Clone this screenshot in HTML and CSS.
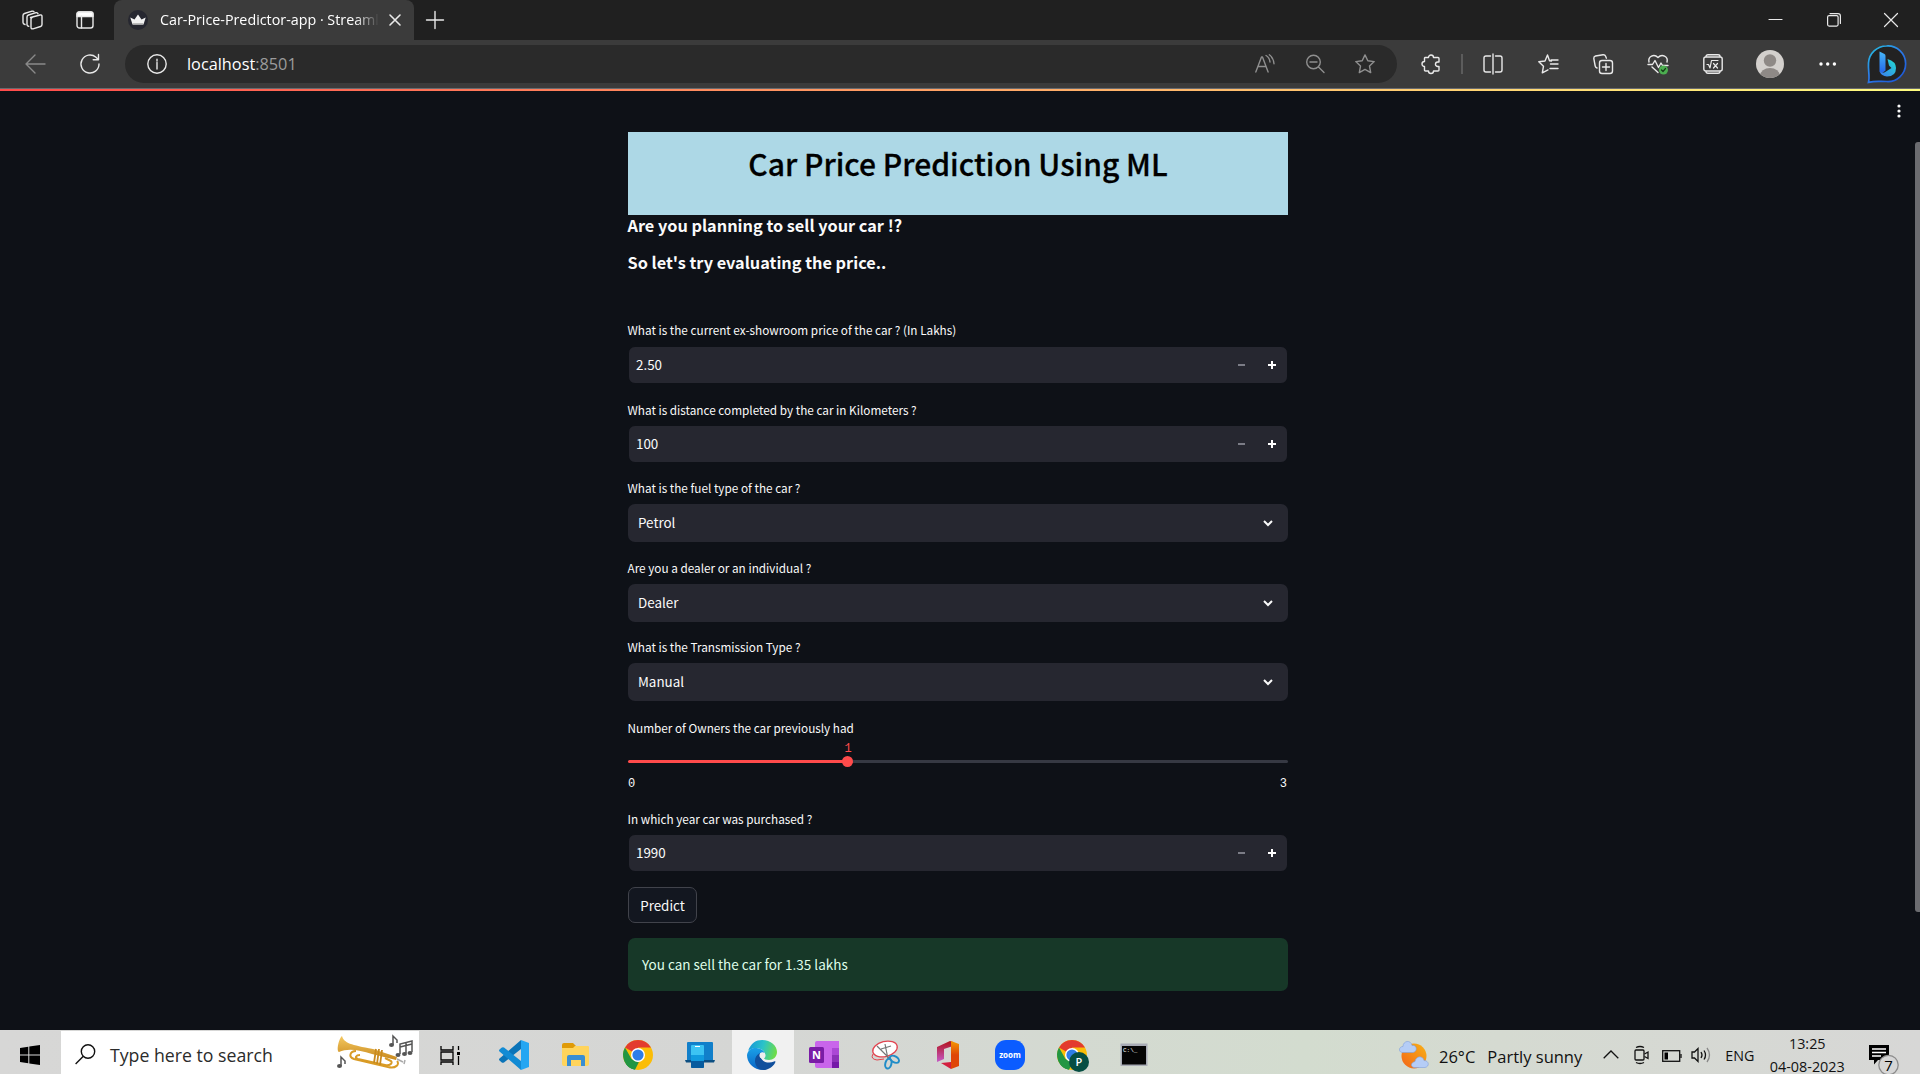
FILE: index.html
```html
<!DOCTYPE html>
<html lang="en">
<head>
<meta charset="utf-8">
<title>Car-Price-Predictor-app · Streamlit</title>
<link rel="stylesheet" href="styles.css">
</head>
<body>
<header class="tabbar">
  <svg class="ico workspaces" viewBox="0 0 22 20"><path d="M8.500 7.500 18 5q2-.5 2 1.500v8q0 1.500-1.500 2l-7.500 2.300q-2 .5-2-1.500V9q0-1.300 1.500-1.700" /><path d="M6.800 16.300 6 16q-1-.5-1-1.500V7q0-1.500 1.500-2l7.500-2.300q1.600-.4 2 1"/><path d="M3 14.500q-2-.5-2-2V5.500q0-1.500 1.500-2L10 1.200q1.500-.4 2 .6"/></svg>
  <svg class="ico tabact" viewBox="0 0 18 18"><rect x="1" y="1" width="16" height="16" rx="2.500"/><path d="M1 3q0-2 2-2h12q2 0 2 2v2.500H1z" fill="#fff"/><path d="M5.500 5v12"/></svg>
  <div class="tab">
    <svg class="favicon" viewBox="0 0 20 20"><circle cx="10" cy="10" r="10" fill="#262730"/><path d="M2.300 7.500 6.500 9.500 10 4.500l3.500 5 4.200-2-2.200 7H4.500z" fill="#f2f2f2"/><path d="m4.500 13 11 0-.4 1.500H4.900z" fill="#bbb"/></svg>
    <span class="tab-title">Car-Price-Predictor-app · Streaml</span>
    <svg class="ico close" viewBox="0 0 12 12"><path d="m1 1 10 10M11 1 1 11"/></svg>
  </div>
  <svg class="ico plus" viewBox="0 0 18 18"><path d="M9 .5v17M.5 9h17"/></svg>
  <div class="winctl">
    <svg class="ico" viewBox="0 0 14 14"><path d="M0 6.500h13" stroke-width="1.200"/></svg>
    <svg class="ico" viewBox="0 0 14 14"><rect x=".6" y="2.600" width="10.500" height="10.500" rx="1.500" stroke-width="1.200"/><path d="M3 .6h8q2.400 0 2.400 2.400v7.500" stroke-width="1.200"/></svg>
    <svg class="ico" viewBox="0 0 14 14"><path d="m.5.5 13 13m0-13-13 13" stroke-width="1.200"/></svg>
  </div>
</header>
<nav class="toolbar">
  <svg class="ico back" viewBox="0 0 20 20"><path d="M10 1 1 10l9 9M1 10h19"/></svg>
  <svg class="ico reload" viewBox="0 0 20 20"><path d="M19 10a9 9 0 1 1-3-6.700L18.500 5.700M18.500.5v5.300h-5.300"/></svg>
  <div class="address">
    <svg class="ico info" viewBox="0 0 20 20"><circle cx="10" cy="10" r="9.200"/><path d="M10 8.500V15M10 5.200V7"/></svg>
    <span class="url">localhost<span class="port">:8501</span></span>
    <svg class="ico" viewBox="0 0 20 20"><path d="M.8 18 6.500 3h1l5.600 15M3 12.500h8M11 1.500q3.500 2 4 6.500M14.300.8q4.200 3 4.700 9"/></svg>
    <svg class="ico" viewBox="0 0 20 20"><circle cx="8.500" cy="8" r="6.800"/><path d="m13.500 13 5.500 5.500M5 8h7"/></svg>
    <svg class="ico" viewBox="0 0 20 20"><path d="m10 .9 2.800 5.900 6.400.8-4.700 4.500 1.200 6.500L10 15.400l-5.700 3.200 1.200-6.500L.8 7.600l6.400-.8z"/></svg>
  </div>
  <svg class="ico puzzle" viewBox="0 0 20 20"><path d="M4 3.500h3.500a2.500 2.500 0 1 1 5 0H17q1 0 1 1V8h-1.300a2.200 2.200 0 0 0 0 4.500H18V16q0 1-1 1h-4.500a2.500 2.500 0 1 1-5 0H4.500q-1 0-1-1v-3.500a2.500 2.500 0 1 1 0-5v-3q0-1 .5-1z"/></svg>
  <span class="sep"></span>
  <div class="tools">
    <svg class="ico" viewBox="0 0 20 20"><path d="M10 0v20M7.500 2H3Q1 2 1 4v12q0 2 2 2h4.500M12.500 2H17q2 0 2 2v12q0 2-2 2h-4.500"/></svg>
    <svg class="ico" viewBox="0 0 20 20"><path d="M13.500 7 11.500 6.800 9.500 1 7 7 .8 7.700l4.700 4.500-1.200 6.700 5.700-3M12.500 10H20M13 6h7M12 14.500h8"/></svg>
    <svg class="ico" viewBox="0 0 20 20"><path d="M4 14q-1.500-.5-1.800-2L.8 4.500Q.6 2.500 2.500 2L10 .8q2-.2 2.600 1.400l.8 2"/><rect x="6.500" y="6.500" width="13" height="13" rx="2.500"/><path d="M13 9.500v7M9.500 13h7"/></svg>
    <svg class="ico" viewBox="0 0 20 20"><path d="M1 8C-.3 2.500 6-.5 10 3.500 14-.5 20.500 2.500 19 8M0 10.500h4.500L7 6.500l3.500 7L13 9l1.500 2.500H20M4 13l6 5.500"/><circle cx="15.500" cy="16" r="4.500" class="green"/><path d="m13.500 16 1.500 1.500 2.500-3" class="tick"/></svg>
    <svg class="ico" viewBox="0 0 20 20"><rect x=".8" y="3" width="18.400" height="14" rx="2"/><path d="M3 2.500Q3 .8 5 .8h10q2 0 2 1.700M3 17.500q0 1.700 2 1.700h10q2 0 2-1.700"/><path d="M4 10.500h1.500l1.500 3.500L8.500 6.500H15M10.500 9.500l4 4.500m0-4.500-4 4.500" stroke-width="1.200"/></svg>
  </div>
  <svg class="avatar" viewBox="0 0 28 28"><clipPath id="av"><circle cx="14" cy="14" r="14"/></clipPath><g clip-path="url(#av)"><rect width="28" height="28" fill="#d3d0cd"/><circle cx="14" cy="10.500" r="6.200" fill="#8e8986"/><ellipse cx="14" cy="26" rx="10" ry="8" fill="#8e8986"/></g></svg>
  <svg class="dots" viewBox="0 0 18 4"><circle cx="2" cy="2" r="1.700"/><circle cx="8.700" cy="2" r="1.700"/><circle cx="15.400" cy="2" r="1.700"/></svg>
  <svg class="bing" viewBox="0 0 38 38"><defs><linearGradient id="bg1" x1="0" y1="0" x2=".8" y2="1"><stop offset="0" stop-color="#25c5e0"/><stop offset=".5" stop-color="#2c7be8"/><stop offset="1" stop-color="#1c57d6"/></linearGradient><linearGradient id="bg2" x1="0" y1="0" x2="0" y2="1"><stop offset="0" stop-color="#46b8f8"/><stop offset="1" stop-color="#2362e8"/></linearGradient><linearGradient id="bg3" x1="1" y1="0" x2="0" y2="1"><stop offset="0" stop-color="#20e0d0"/><stop offset="1" stop-color="#3c78f0"/></linearGradient></defs><path d="M19.500 1a17.800 17.800 0 1 1 0 35.500c-7 0-11-.8-18 .8C3 31 1 26 1.500 18A18 18 0 0 1 19.500 1z" fill="#222" stroke="url(#bg1)" stroke-width="1.700"/><path d="m12.500 6.500 5 2.500q1 .5 1 2v14.500l-3.800 3-2.200-2z" fill="url(#bg2)"/><path d="M20.500 14q8.500 2.500 8.500 9 0 8.500-9 8.500-5.500-.5-7.500-5 3 2.500 6.500 0l5.500-3.500-2.500-2.500z" fill="url(#bg3)"/></svg>
</nav>
<div class="decoration"></div>
<main class="page">
  <svg class="kebab" viewBox="0 0 4 14"><circle cx="2" cy="2" r="1.600"/><circle cx="2" cy="7" r="1.600"/><circle cx="2" cy="12" r="1.600"/></svg>
  <div class="scroll"></div>
  <section class="column">
    <div class="banner"><h1>Car Price Prediction Using ML</h1></div>
    <h4 class="q1">Are you planning to sell your car !?</h4>
    <h4 class="q2">So let's try evaluating the price..</h4>
    <div class="fields">
      <div class="field"><label>What is the current ex-showroom price of the car ? (In Lakhs)</label><div class="number"><span>2.50</span><i class="minus"></i><i class="add"></i></div></div>
      <div class="field distance"><label>What is distance completed by the car in Kilometers ?</label><div class="number"><span>100</span><i class="minus"></i><i class="add"></i></div></div>
      <div class="field"><label>What is the fuel type of the car ?</label><div class="select"><span>Petrol</span><svg class="chev" viewBox="0 0 10 7"><path d="m1 1 4 4 4-4"/></svg></div></div>
      <div class="field seller"><label>Are you a dealer or an individual ?</label><div class="select"><span>Dealer</span><svg class="chev" viewBox="0 0 10 7"><path d="m1 1 4 4 4-4"/></svg></div></div>
      <div class="field"><label>What is the Transmission Type ?</label><div class="select"><span>Manual</span><svg class="chev" viewBox="0 0 10 7"><path d="m1 1 4 4 4-4"/></svg></div></div>
      <div class="field slider-field"><label>Number of Owners the car previously had</label>
        <div class="slider"><div class="track"><div class="thumb" style="left:33.333%"><b>1</b></div></div><div class="ticks"><span>0</span><span>3</span></div></div></div>
      <div class="field year"><label>In which year car was purchased ?</label><div class="number"><span>1990</span><i class="minus"></i><i class="add"></i></div></div>
    </div>
    <button class="predict">Predict</button>
    <div class="alert">You can sell the car for 1.35 lakhs</div>
  </section>
</main>
<footer class="taskbar">
  <div class="start"><svg viewBox="0 0 20 20" width="20" height="20"><path d="M0 3 8.300 1.700v7.800H0zM9.300 1.500 20 0v9.500H9.300zM0 10.500h8.300v7.800L0 17zM9.300 10.500H20V20L9.300 18.500z"/></svg></div>
  <div class="search">
    <svg class="lens" viewBox="0 0 21 21"><circle cx="13" cy="7.500" r="6.700"/><path d="M8.300 12.300.6 20"/></svg>
    <span>Type here to search</span>
    <svg class="trumpet" viewBox="0 0 78 36"><defs><linearGradient id="tg" x1="0" y1="0" x2="0" y2="1"><stop offset="0" stop-color="#f4c860"/><stop offset="1" stop-color="#c98a1e"/></linearGradient></defs><path d="M5 1C7 8 14 10 36 14l24 8-1 3-24-6C22 15 11 13 2 17-1 16 2 3 5 1z" fill="url(#tg)"/><path d="M19 16c-6 0-8 6-2 8l34 8c8 2 12-3 9-6M23 20c-4 0-6 3-2 4l27 6c5 1 8-2 6-4l-6-3" fill="none" stroke="#d99b25" stroke-width="2"/><path d="m39 14-2 14m5-14-2 15m5-14-2 15" stroke="#c98a1e" stroke-width="1.800"/><path d="m60 24 6 3m2-2-1 4" stroke="#aaa" stroke-width="1.500"/><g fill="none" stroke="#555" stroke-width="1.500"><path d="M56 10V1l4 4v3M4 31v-9l4 4v3M63 19V9l12-3v11M69 18V8M63 12l12-3"/></g><g fill="#555"><ellipse cx="54.500" cy="10" rx="2.500" ry="2"/><ellipse cx="2.500" cy="31" rx="2.500" ry="2"/><ellipse cx="61" cy="20" rx="2.500" ry="2"/><ellipse cx="67.500" cy="19" rx="2.500" ry="2"/><ellipse cx="73" cy="18" rx="2.500" ry="2"/></g></svg>
  </div>
  <div class="apps">
    <div class="app"><svg viewBox="0 0 30 30"><path d="M1 0v4h12V0M1 19v-3h12v3M1 6h12v8H1zM18.500 0v4M18.500 10v9" transform="translate(5 6)" fill="none" stroke="#000" stroke-width="1.300"/><path d="M22 12h3v3h-3z"/></svg></div>
    <div class="app"><svg viewBox="0 0 30 30"><path d="m22 0 8 3v24l-8 3z" fill="#25a6f2"/><path d="M22 0v9L5 22.500q-1.500.7-2.500-.3L.5 20.500q-1-1 0-2z" fill="#0b74b8"/><path d="M22 30v-9L5 7.500q-1.500-.7-2.500.3L.5 9.500q-1 1 0 2z" fill="#128bd4"/></svg></div>
    <div class="app"><svg viewBox="0 0 30 30"><path d="M1 5q0-2 2-2h9l3 3-3 5H1z" fill="#e09a07"/><path d="M1 8h11l2-2h13q1 0 1 1v17q0 2-2 2H3q-2 0-2-2z" fill="#ffd45c"/><path d="M6 26V17q0-2 2-2h14q2 0 2 2v9h-4v-6H10v6z" fill="#3a8ed2"/></svg></div>
    <div class="app"><svg viewBox="0 0 30 30"><use href="#chrome"/></svg></div>
    <div class="app"><svg viewBox="0 0 30 30"><path d="M3 2h24q1 0 1 1v17H2V3q0-1 1-1z" fill="#117fca"/><path d="M0 20h30l-1 2.500H1z" fill="#0d4f82"/><path d="M7 5h11q1 0 1 1v21q0 1-1 1H7q-1 0-1-1V6q0-1 1-1z" fill="#3cc3f3"/><path d="M6 15h13v6H6z" fill="#119bdf"/><path d="M6 21h13v6q0 1-1 1H7q-1 0-1-1z" fill="#075b9e"/><path d="M10 6.500h5" stroke="#fff"/></svg></div>
    <div class="app active"><svg viewBox="0 0 30 30"><defs><linearGradient id="e1" x1="0" y1=".3" x2="1" y2=".5"><stop offset="0" stop-color="#1798d8"/><stop offset=".5" stop-color="#2bc3c8"/><stop offset="1" stop-color="#70dd45"/></linearGradient><linearGradient id="e2" x1="0" y1="0" x2="0" y2="1"><stop offset="0" stop-color="#1aa1e8"/><stop offset="1" stop-color="#0964c5"/></linearGradient></defs><path d="M1 11C4 3 9 0 15 0c9 0 15 6 15 12 0 5-4 8-8 8-3 0-5-1-5-2 0-1 1.500-1.500 1-4-.6-4-5-6-9-6-4 0-7 2-8 3z" fill="url(#e1)"/><path d="M0 15C1 9 6 7.500 9.500 8c5 .5 7.500 3 8 5-4-2-7 2-5.500 7 1 4 4 7 9 8-3 2-7 2-9 1.500C5 28 0 22 0 15z" fill="url(#e2)"/><path d="M13 13c-6 3-7 11-1 16 6 3 13-1 16-6 1-2 0-2-1-1.500-7 3-15-1-14-8.500z" fill="#104f9c"/><circle cx="15.500" cy="15.500" r="3" fill="#eee"/></svg></div>
    <div class="app"><svg viewBox="0 0 30 30"><path d="M8 1h22v27H8q-2 0-2-2V3q0-2 2-2z" fill="#c965eb"/><path d="M23 8h7v7h-7z" fill="#ab47d5"/><path d="M23 15h7v7h-7z" fill="#8c31b8"/><path d="M23 22h7v6h-7z" fill="#7519a8"/><rect y="7" width="15" height="16" rx="1.500" fill="#7a1ca6"/><text x="7.500" y="19" class="on">N</text></svg></div>
    <div class="app"><svg viewBox="0 0 30 30"><g transform="rotate(-14 14 9)"><ellipse cx="14" cy="9" rx="12.500" ry="7.500" fill="#fff" stroke="#e24450" stroke-width="1.300"/></g><path d="M2 14q-3 5 4 6l7-1" fill="none" stroke="#e24450"/><path d="M14 4l3 15M6 6l12 12M10 9l10-3" stroke="#777" stroke-width="1.200"/><g fill="none" stroke="#208dc8" stroke-width="2"><ellipse cx="17.500" cy="23.500" rx="3" ry="5" transform="rotate(15 17 23)"/><ellipse cx="23.500" cy="19" rx="5" ry="3" transform="rotate(30 23 19)"/></g></svg></div>
    <div class="app"><svg viewBox="0 0 30 30"><defs><linearGradient id="o1" x1="0" y1="0" x2="0" y2="1"><stop offset="0" stop-color="#b3121b"/><stop offset="1" stop-color="#c55bc8"/></linearGradient><linearGradient id="o2" x1="0" y1="0" x2="0" y2="1"><stop offset="0" stop-color="#f59a00"/><stop offset=".5" stop-color="#df4607"/></linearGradient></defs><path d="M4 7 17 1l3 1v4l-9 3v10l-7 3z" fill="url(#o1)"/><path d="m18 1 8 3v22l-8 3z" fill="url(#o2)"/><path d="m8 23 10-1v7z" fill="#d3203f"/></svg></div>
    <div class="app"><svg viewBox="0 0 30 30"><rect width="30" height="30" rx="11" fill="#0b5cff"/><text x="15" y="17.500" class="zm">zoom</text></svg></div>
    <div class="app"><svg viewBox="0 0 30 30"><g id="chrome"><circle cx="15" cy="15" r="15" fill="#fbbd07"/><path d="M15 15 2 7.500A15 15 0 0 1 28 7.500H15z" fill="#e33b2e"/><path d="M2 7.500 8.500 19 15 22l-3.500 7.600A15 15 0 0 1 2 7.500z" fill="#229643"/><path d="M8 19q3 4 8 3l-4 7.700Q5 28 3 24z" fill="#229643"/><circle cx="15" cy="15" r="7" fill="#fff"/><circle cx="15" cy="15" r="5.600" fill="#2f7de8"/></g><circle cx="22" cy="22" r="10" fill="#064e43"/><text x="22" y="26" class="cp">P</text></svg></div>
    <div class="app"><svg viewBox="0 0 30 30"><rect x="1.500" y="3.500" width="27" height="22.500" fill="#a8abb5"/><rect x="3" y="6" width="24" height="18.500" fill="#050505"/><text x="4" y="12" class="cmd">C:\_</text></svg></div>
  </div>
  <div class="weather"><svg viewBox="0 0 30 30"><defs><linearGradient id="w1" x1="1" y1="0" x2="0" y2="1"><stop offset="0" stop-color="#f9b216"/><stop offset="1" stop-color="#f26419"/></linearGradient></defs><circle cx="15" cy="16" r="12.500" fill="url(#w1)"/><g fill="#b5cdf6" stroke="#7fa0dc" stroke-width=".6"><path d="M3 12.500c-4-1-3-6 1-6 0-6 8-7 9-1 5-1 6 6 1 7z"/><path d="M15 27.500c-4-1-3-5 1-6 1-6 8-6 9-1 5 0 6 6 1 7z"/></g></svg><span>26°C</span><span>Partly sunny</span></div>
  <div class="tray">
    <svg class="t-up" viewBox="0 0 16 9"><path d="m.7 8.300 7.300-7.300 7.300 7.300"/></svg>
    <svg class="t-cam" viewBox="0 0 15 18"><rect x="1" y="4" width="9" height="10" rx="1"/><path d="m10.500 8 3.500-2v6.500l-3.500-2M2 1.500q4-2 8 0M2 16.500q4 2 8 0"/></svg>
    <svg class="t-bat" viewBox="0 0 20 12"><rect x=".7" y=".7" width="17" height="10.600"/><path d="M19 4v4"/><path d="M2.500 2.500h3.500v7H2.500z" fill="#000" stroke="none"/></svg>
    <svg class="t-snd" viewBox="0 0 21 16"><path d="M1 5h2.500L7 1.500v13L3.500 11H1zM10 5q2 3 0 6M13 3.500q3 4.500 0 9"/><path d="M16 1q5 7 0 14" class="faint"/></svg>
    <span class="lang">ENG</span>
    <div class="clock"><span>13:25</span><span>04-08-2023</span></div>
    <svg class="t-note" viewBox="0 0 31 31"><path d="M0 0h20v15H9l-4 4.500V15H0z" fill="#000" stroke="none"/><path d="M3 4h14M3 7.500h14M3 11h9" class="lines"/><circle cx="19.500" cy="20" r="9.700" class="badge"/><text x="19.500" y="25.500">7</text></svg>
  </div>
</footer>
</body>
</html>
```
FILE: styles.css
```css
* { box-sizing: border-box; }
body {
  margin: 0; width: 1920px; height: 1074px; overflow: hidden;
  display: flex; flex-direction: column;
  background: #0e1117; color: #fafafa;
  font-family: "Noto Sans CJK SC", "Noto Sans", sans-serif;
}
svg { display: block; flex: none; overflow: visible; }
.ico { fill: none; stroke: #e9e9e9; stroke-width: 1.4; stroke-linecap: round; stroke-linejoin: round; width: 20px; height: 20px; }

/* window tab strip */
.tabbar { height: 40px; background: #202020; display: flex; align-items: center; font-family: "Open Sans", sans-serif; }
.workspaces { width: 22px; height: 20px; margin-left: 22px; }
.tabact { width: 18px; height: 18px; margin-left: 32px; }
.tab { width: 300px; height: 40px; margin-left: 20px; padding: 0 14px 0 14px; background: #3b3b3b; border-radius: 8px 8px 0 0; display: flex; align-items: center; }
.favicon { width: 20px; height: 20px; }
.tab-title { margin-left: 12px; width: 223px; flex: none; font-size: 14.3px; line-height: 20px; padding-bottom: 1px; white-space: nowrap; color: #fff;
  -webkit-mask-image: linear-gradient(90deg, #000 195px, transparent 219px); mask-image: linear-gradient(90deg, #000 195px, transparent 219px); }
.close { width: 12px; height: 12px; margin-left: 6px; stroke-width: 1.6; }
.plus { width: 18px; height: 18px; margin-left: 12px; }
.winctl { margin-left: auto; margin-right: 22px; display: flex; gap: 43.5px; }
.winctl .ico { width: 14px; height: 14px; }

/* toolbar */
.toolbar { flex: none; height: 48px; background: #3b3b3b; display: flex; align-items: center; }
.back { margin-left: 25px; stroke: #8a8a8a; }
.reload { margin-left: 35px; }
.address { margin-left: 25px; width: 1272px; height: 38px; padding: 0 22px 0 22px; border-radius: 19px; background: #2a2a2a; display: flex; align-items: center; gap: 30px; font-family: "Open Sans", sans-serif; }
.address .ico { stroke: #8f8f8f; }
.address .info { stroke: #e9e9e9; }
.url { flex: 1; margin-left: -10px; font-size: 16.3px; color: #fff; line-height: 36px; padding-bottom: 1px; }
.port { color: #9b9b9b; }
.puzzle { margin-left: 24px; }
.sep { width: 2px; height: 20px; margin-left: 20px; background: #5c5c5c; }
.tools { display: flex; gap: 35px; margin-left: 20px; }
.ico .green { fill: #4cae50; stroke: none; }
.ico .tick { stroke: #173d19; stroke-width: 1.2; }
.avatar { width: 28px; height: 28px; margin-left: 33px; }
.dots { width: 18px; height: 4px; margin-left: 35px; fill: #fff; }
.bing { width: 38px; height: 38px; margin-left: 30px; }
.decoration { flex: none; height: 3px; border-top: 1px solid #686a6e; background: linear-gradient(90deg, #ff4b4b, #fffd80); }

/* app page */
.page { position: relative; flex: none; height: 939px; background: #0e1117; }
.kebab { position: absolute; width: 4px; height: 14px; right: 19px; top: 13px; fill: #fafafa; }
.scroll { position: absolute; right: 0; top: 51px; width: 5px; height: 770px; border-radius: 3px 0 0 3px; background: #6b6c70; }
.column { width: 660px; margin-left: 628px; padding-top: 41px; }
.banner { height: 83px; padding-top: 9px; background: lightblue; text-align: center; }
h1 { margin: 0; color: #000; font-size: 30px; line-height: 45px; font-weight: 500; white-space: nowrap; -webkit-text-stroke: .3px #000; }
h4 { margin: 0; font-size: 16.3px; line-height: 20px; font-weight: 700; text-indent: -.5px; }
.q2 { margin-top: 17px; }
.fields { margin-top: 49px; display: flex; flex-direction: column; gap: 16px; }
.field { display: flex; flex-direction: column; gap: 7px; }
.seller { margin-top: 1px; }
label { font-size: 11.75px; line-height: 18px; white-space: nowrap; text-indent: -.5px; }
.distance { margin-top: 1px; gap: 6px; }
.number, .select { height: 38px; border-radius: 7px; background: #262730; display: flex; align-items: center; font-size: 13.4px; }
.number span, .select span { line-height: 34px; padding-bottom: 2px; }
.number { border: 1px solid #0e1117; padding: 0 11.5px 0 7px; }
.number span { flex: 1; }
.minus { width: 7px; height: 2px; background: #7b7c86; margin-right: 23px; }
.add { width: 8px; height: 8px; background: linear-gradient(#fff, #fff) 50% 50% / 8px 2px no-repeat, linear-gradient(#fff, #fff) 50% 50% / 2px 8px no-repeat; }
.select { padding: 0 15px 0 10px; justify-content: space-between; }
.chev { width: 10px; height: 7px; fill: none; stroke: #fafafa; stroke-width: 2; }
.slider-field { gap: 0; margin-top: 2px; }
.slider { height: 57px; padding-top: 23px; font-family: "Liberation Mono", monospace; font-size: 12px; }
.track { position: relative; height: 3px; border-radius: 2px; background: linear-gradient(90deg, #ff4b4b 33.33%, #363943 33.33%); }
.thumb { position: absolute; top: -4px; width: 11px; height: 11px; margin-left: -5.5px; border-radius: 50%; background: #ff4b4b; }
.thumb b { position: absolute; left: 2px; bottom: 11px; font-weight: 400; color: #ff4b4b; line-height: 14px; }
.ticks { display: flex; justify-content: space-between; margin-top: 14px; padding-right: 1px; line-height: 14px; }
.year { gap: 6px; }
.predict { display: block; width: 69px; height: 36px; margin-top: 15px; padding: 0; border: 1px solid #41434b; border-radius: 7px; background: #131720; color: #fafafa; font: 13.4px/34px "Noto Sans CJK SC", sans-serif; }
.alert { height: 53px; margin-top: 15px; padding-left: 14px; border-radius: 7px; background: #173828; color: #dffde9; font-size: 13.5px; line-height: 52px; }

/* taskbar */
.taskbar { flex: none; height: 44px; display: flex; background: linear-gradient(90deg, #d7d7d6, #d5d6d4 40%, #d3dccf 68%, #d5dad1 78%, #d7d7d6); color: #111; font-family: "Open Sans", sans-serif; }
.start { width: 61px; padding: 15px 0 0 20px; }
.search { width: 358px; height: 43px; margin-top: 1px; padding-left: 14px; background: #fff; display: flex; font-size: 17.7px; line-height: 49px; color: #2b2b2b; white-space: nowrap; }
.search span { flex: none; width: 241px; padding-left: 14px; }
.lens { width: 21px; height: 21px; margin-top: 13px; fill: none; stroke: #111; stroke-width: 1.4; }
.trumpet { width: 78px; height: 36px; margin-top: 4px; }
.apps { display: flex; }
.app { flex: none; width: 62px; height: 44px; padding: 10px 0 0 15px; }
.app:first-child { width: 65px; padding-left: 16px; margin-right: -1px; }
.app:nth-child(2) { margin-left: 1px; }
.app svg { width: 30px; height: 30px; }
.active { background: #f1f1f1; }
.app text { text-anchor: middle; fill: #fff; font-family: "Open Sans", sans-serif; }
.on { font-size: 11px; font-weight: 700; }
.zm { font-size: 8px; font-weight: 700; }
.cp { font-size: 11px; font-weight: 600; }
.app .cmd { font: 6px "Liberation Mono", monospace; text-anchor: start; }
.weather { display: flex; margin-left: 233px; font-size: 16.5px; line-height: 53px; white-space: nowrap; }
.weather svg { width: 30px; height: 30px; margin: 10px 10px 0 0; }
.weather span + span { margin-left: 12px; }
.tray { flex: 1; display: flex; align-items: flex-start; margin-left: 21px; }
.tray svg { fill: none; stroke: #111; stroke-width: 1.3; }
.t-up { width: 16px; height: 9px; margin-top: 20px; }
.t-cam { width: 15px; height: 18px; margin: 16px 0 0 15px; }
.t-bat { width: 20px; height: 12px; margin: 20px 0 0 13px; }
.t-snd { width: 21px; height: 16px; margin: 17px 0 0 9px; }
.t-snd .faint { stroke: #888; }
.lang { margin-left: 13px; width: 30px; font-size: 14.3px; line-height: 52px; }
.clock { width: 76px; margin-left: 14px; height: 44px; display: flex; flex-direction: column; align-items: center; font-size: 14.4px; line-height: 23px; padding-top: 2px; white-space: nowrap; }
.t-note { width: 31px; height: 31px; margin: 15px 0 0 24px; }
.t-note .lines { stroke: #fff; }
.t-note .badge { fill: #d6d6d6; stroke: #8c8c8c; }
.t-note text { fill: #000; stroke: none; font: 15px "Open Sans", sans-serif; text-anchor: middle; }
```
